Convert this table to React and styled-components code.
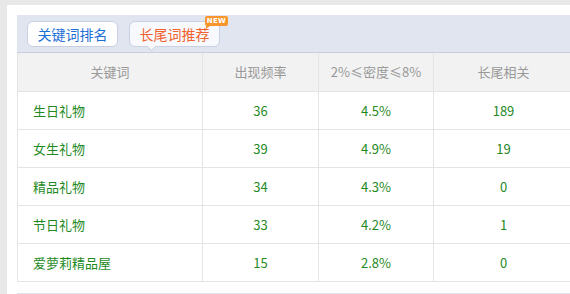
import React from 'react';
import styled, { createGlobalStyle } from 'styled-components';

const GlobalStyle = createGlobalStyle`
  body {
    margin: 0;
    background: #e8e8e8;
    overflow: hidden;
    font-family: "Noto Sans CJK SC", "Noto Sans", sans-serif;
  }
`;

const rows = [
  { word: '生日礼物', freq: 36, density: '4.5%', tail: 189 },
  { word: '女生礼物', freq: 39, density: '4.9%', tail: 19 },
  { word: '精品礼物', freq: 34, density: '4.3%', tail: 0 },
  { word: '节日礼物', freq: 33, density: '4.2%', tail: 1 },
  { word: '爱萝莉精品屋', freq: 15, density: '2.8%', tail: 0 },
];

export default function App() {
  return (
    <>
      <GlobalStyle />
      <Page>
        <Panel>
          <TabBar>
            <Tab>关键词排名</Tab>
            <Tab active>
              长尾词推荐
              <Badge>NEW</Badge>
            </Tab>
          </TabBar>
          <Table>
            <colgroup>
              <col style={{ width: 185 }} />
              <col style={{ width: 116 }} />
              <col style={{ width: 115 }} />
              <col style={{ width: 140 }} />
            </colgroup>
            <thead>
              <tr>
                <Th>关键词</Th>
                <Th>出现频率</Th>
                <Th>2%≤密度≤8%</Th>
                <Th>长尾相关</Th>
              </tr>
            </thead>
            <tbody>
              {rows.map((r) => (
                <tr key={r.word}>
                  <Td left>{r.word}</Td>
                  <Td>{r.freq}</Td>
                  <Td>{r.density}</Td>
                  <Td>{r.tail}</Td>
                </tr>
              ))}
            </tbody>
          </Table>
          <NextBar />
        </Panel>
      </Page>
    </>
  );
}

const Page = styled.div`
  padding: 5px 0 0 7px;
  width: 640px;
`;

const Panel = styled.div`
  background: #fff;
  padding: 10px 0 0 10px;
  height: 400px;
`;

const TabBar = styled.div`
  display: flex;
  align-items: center;
  gap: 11px;
  height: 37px;
  padding: 0 10px;
  background: #e1e5ef;
  border-bottom: 1px solid #c9cfdd;
`;

const Tab = styled.div`
  position: relative;
  box-sizing: border-box;
  width: 91px;
  height: 26px;
  display: flex;
  align-items: center;
  justify-content: center;
  font-size: 14px;
  border: 1px solid #c8d0e2;
  border-radius: 6px;
  background: ${(p) => (p.active ? '#f7f9fc' : '#fff')};
  color: ${(p) => (p.active ? '#f0622f' : '#1d6fd6')};

  &::after {
    content: '';
    display: ${(p) => (p.active ? 'block' : 'none')};
    position: absolute;
    left: 18px;
    bottom: -4px;
    width: 6px;
    height: 6px;
    background: #f7f9fc;
    border-right: 1px solid #c8d0e2;
    border-bottom: 1px solid #c8d0e2;
    transform: rotate(45deg);
  }
`;

const Badge = styled.span`
  position: absolute;
  left: 75px;
  top: -6px;
  width: 23px;
  height: 10px;
  background: #f7962c;
  border-radius: 2px;
  color: #fff;
  font-family: "DejaVu Sans", sans-serif;
  font-size: 7px;
  font-weight: bold;
  line-height: 10px;
  text-align: center;
  letter-spacing: 0.3px;

  &::after {
    content: '';
    position: absolute;
    left: 1px;
    bottom: -3px;
    border-left: 4px solid #f7962c;
    border-bottom: 3px solid transparent;
  }
`;

const Table = styled.table`
  border-collapse: collapse;
  table-layout: fixed;
  width: 556px;
  font-size: 13px;
`;

const Th = styled.th`
  height: 38px;
  padding: 0;
  box-sizing: border-box;
  background: #f2f2f2;
  color: #999;
  font-weight: normal;
  text-align: center;
  border: 1px solid #e4e4e4;
  border-top: none;
`;

const Td = styled.td`
  height: 38px;
  padding: ${(p) => (p.left ? '0 0 0 15px' : '0')};
  box-sizing: border-box;
  color: #1f8a1f;
  text-align: ${(p) => (p.left ? 'left' : 'center')};
  border: 1px solid #e4e4e4;
`;

const NextBar = styled.div`
  margin-top: 11px;
  height: 40px;
  background: #e1e5ef;
`;
